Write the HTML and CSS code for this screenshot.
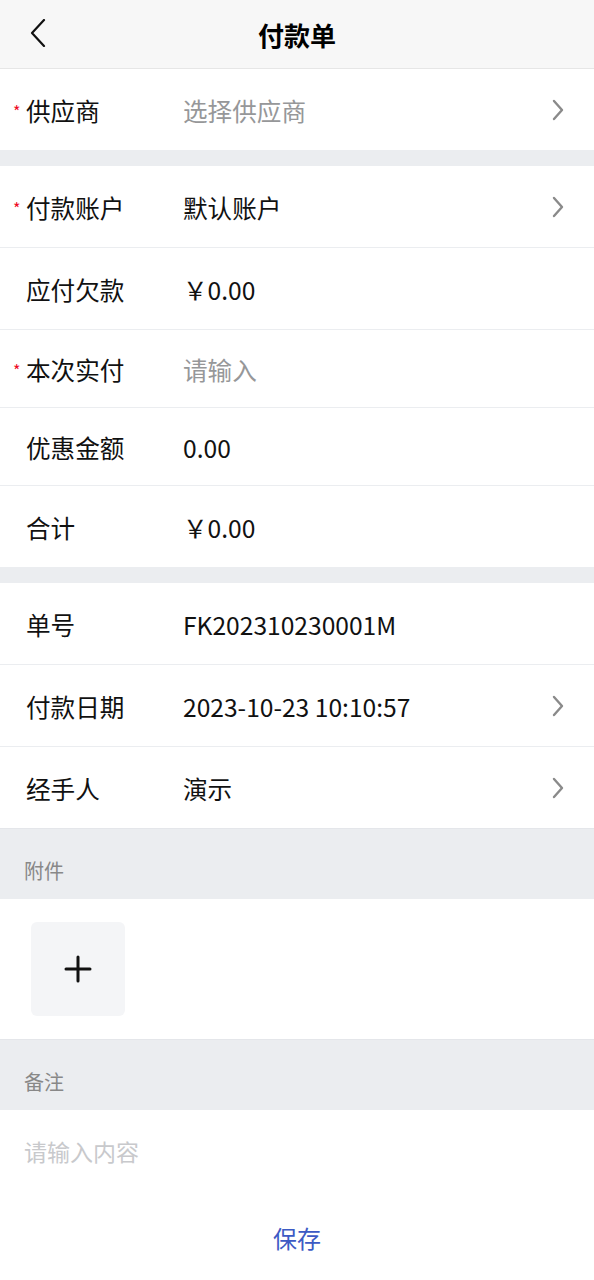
FILE: index.html
```html
<!DOCTYPE html>
<html lang="zh-CN">
<head>
    <meta charset="UTF-8">
    <meta name="viewport" content="width=device-width, initial-scale=1.0">
    <title>付款单</title>
    <link rel="stylesheet" href="styles.css">
</head>
<body>
    <div class="nav-bar">
        <span class="nav-back">
            <svg width="16" height="28" viewBox="0 0 16 28"><path d="M14 1 L2 14 L14 27" fill="none" stroke="#111" stroke-width="2.2" stroke-linecap="round" stroke-linejoin="round"/></svg>
        </span>
        <div class="nav-title">付款单</div>
    </div>

    <div class="group">
        <div class="cell">
            <div class="cell-label required">供应商</div>
            <div class="cell-value placeholder">选择供应商</div>
            <span class="arrow"><svg width="12" height="22" viewBox="0 0 12 22"><path d="M2 2 L10 11 L2 20" fill="none" stroke="#8a8a8a" stroke-width="2.4" stroke-linecap="round" stroke-linejoin="round"/></svg></span>
        </div>
    </div>

    <div class="group">
        <div class="cell">
            <div class="cell-label required">付款账户</div>
            <div class="cell-value">默认账户</div>
            <span class="arrow"><svg width="12" height="22" viewBox="0 0 12 22"><path d="M2 2 L10 11 L2 20" fill="none" stroke="#8a8a8a" stroke-width="2.4" stroke-linecap="round" stroke-linejoin="round"/></svg></span>
        </div>
        <div class="cell">
            <div class="cell-label">应付欠款</div>
            <div class="cell-value">￥0.00</div>
        </div>
        <div class="cell cell-input">
            <div class="cell-label required">本次实付</div>
            <div class="cell-value placeholder">请输入</div>
        </div>
        <div class="cell cell-input">
            <div class="cell-label">优惠金额</div>
            <div class="cell-value">0.00</div>
        </div>
        <div class="cell">
            <div class="cell-label">合计</div>
            <div class="cell-value">￥0.00</div>
        </div>
    </div>

    <div class="group group-last">
        <div class="cell">
            <div class="cell-label">单号</div>
            <div class="cell-value">FK202310230001M</div>
        </div>
        <div class="cell">
            <div class="cell-label">付款日期</div>
            <div class="cell-value">2023-10-23 10:10:57</div>
            <span class="arrow"><svg width="12" height="22" viewBox="0 0 12 22"><path d="M2 2 L10 11 L2 20" fill="none" stroke="#8a8a8a" stroke-width="2.4" stroke-linecap="round" stroke-linejoin="round"/></svg></span>
        </div>
        <div class="cell">
            <div class="cell-label">经手人</div>
            <div class="cell-value">演示</div>
            <span class="arrow"><svg width="12" height="22" viewBox="0 0 12 22"><path d="M2 2 L10 11 L2 20" fill="none" stroke="#8a8a8a" stroke-width="2.4" stroke-linecap="round" stroke-linejoin="round"/></svg></span>
        </div>
    </div>

    <div class="section-title">附件</div>
    <div class="uploader">
        <div class="upload-btn">
            <svg width="28" height="28" viewBox="0 0 28 28"><path d="M14 2 V26 M2 14 H26" stroke="#111" stroke-width="3" stroke-linecap="round"/></svg>
        </div>
    </div>

    <div class="section-title">备注</div>
    <div class="remark">请输入内容</div>

    <div class="footer">
        <button class="save-btn">保存</button>
    </div>
</body>
</html>
```

FILE: styles.css
```css
body {
    margin: 0;
    font-family: "Noto Sans CJK SC", "Noto Sans", sans-serif;
    background-color: #ffffff;
    color: #111111;
}
.nav-bar {
    height: 68px;
    background-color: #f7f7f7;
    border-bottom: 1px solid #e6e6e6;
    display: flex;
    align-items: center;
    justify-content: center;
    position: relative;
}
.nav-back {
    position: absolute;
    left: 30px;
    top: 19px;
    display: flex;
}
.nav-title {
    font-size: 26px;
    font-weight: bold;
    color: #000000;
}
.group {
    background-color: #ffffff;
    border-bottom: 16px solid #ebedf0;
}
.group-last {
    border-bottom: none;
}
.cell {
    height: 81px;
    display: flex;
    align-items: center;
    padding: 0 30px 0 26px;
    border-bottom: 1px solid #ebedf0;
    font-size: 24.6px;
}
.cell:last-child {
    border-bottom: none;
}
.cell-input {
    height: 77px;
}
.cell-label {
    width: 157px;
    flex-shrink: 0;
    position: relative;
}
.required::before {
    content: "*";
    position: absolute;
    left: -13px;
    top: 7px;
    color: #ee0a24;
    font-size: 16px;
}
.cell-value {
    flex: 1;
}
.placeholder {
    color: #969799;
}
.arrow {
    display: flex;
}
.section-title {
    height: 71px;
    background-color: #ebedf0;
    border-top: 1px solid #e4e6ea;
    box-sizing: border-box;
    display: flex;
    align-items: center;
    padding: 12px 0 0 24px;
    font-size: 20px;
    color: #888888;
}
.uploader {
    padding: 23px 31px;
}
.upload-btn {
    width: 94px;
    height: 94px;
    background-color: #f4f5f7;
    border-radius: 6px;
    display: flex;
    align-items: center;
    justify-content: center;
}
.remark {
    padding: 24px 24px 0;
    height: 60px;
    font-size: 23px;
    color: #c8c9cc;
}
.footer {
    display: flex;
    justify-content: center;
    padding-top: 20px;
}
.save-btn {
    background: none;
    border: none;
    font-family: inherit;
    font-size: 24px;
    color: #3c5ac4;
    padding: 6px 12px;
}
```
